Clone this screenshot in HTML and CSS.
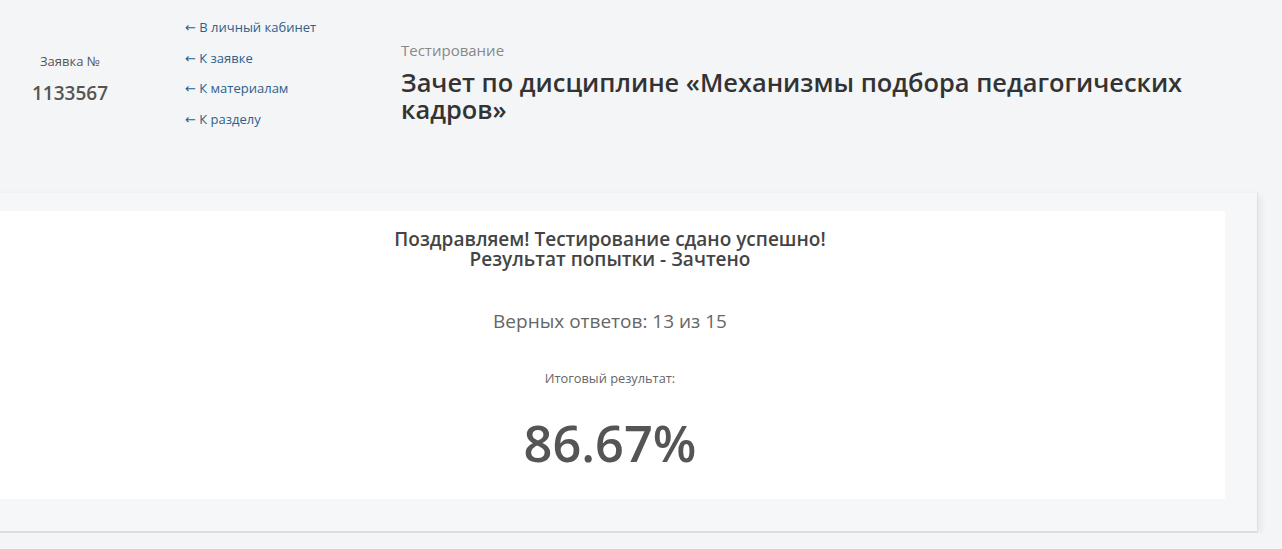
FILE: index.html
```html
<!DOCTYPE html>
<html lang="ru">
<head>
    <meta charset="UTF-8">
    <meta name="viewport" content="width=device-width, initial-scale=1.0">
    <title>Тестирование</title>
    <link rel="stylesheet" href="styles.css">
</head>
<body>
    <div class="page-head">
        <div class="order">
            <div class="order-label">Заявка №</div>
            <div class="order-number">1133567</div>
        </div>

        <ul class="back-links">
            <li><a href="#"><span class="arrow">&larr;</span> В личный кабинет</a></li>
            <li><a href="#"><span class="arrow">&larr;</span> К заявке</a></li>
            <li><a href="#"><span class="arrow">&larr;</span> К материалам</a></li>
            <li><a href="#"><span class="arrow">&larr;</span> К разделу</a></li>
        </ul>

        <div class="page-title">
            <div class="page-type">Тестирование</div>
            <h1>Зачет по дисциплине «Механизмы подбора педагогических кадров»</h1>
        </div>
    </div>

    <div class="card">
        <div class="result">
            <p class="result-status">Поздравляем! Тестирование сдано успешно!<br>Результат попытки - Зачтено</p>
            <p class="result-answers">Верных ответов: 13 из 15</p>
            <p class="result-label">Итоговый результат:</p>
            <p class="result-score">86.67%</p>
        </div>
    </div>
</body>
</html>
```

FILE: styles.css
```css
body {
    margin: 0;
    font-family: "Open Sans", Arial, sans-serif;
    background-color: #f4f5f7;
    color: #333;
    overflow: hidden;
}

.page-head {
    display: flex;
    align-items: flex-start;
    height: 193px;
}

.order {
    width: 140px;
    padding-top: 51px;
    text-align: center;
    color: #555;
}

.order-label {
    font-size: 13px;
    line-height: 20px;
}

.order-number {
    margin-top: 10px;
    font-size: 19px;
    font-weight: 600;
    line-height: 24px;
}

.back-links {
    list-style: none;
    margin: 0 0 0 45px;
    padding: 12px 0 0;
    width: 216px;
}

.back-links li {
    height: 30.7px;
    font-size: 13px;
    line-height: 30.7px;
}

.back-links a {
    color: #2d5f8b;
    text-decoration: none;
}

.back-links .arrow {
    font-family: "DejaVu Sans", sans-serif;
    line-height: 13px;
}

.page-title {
    flex: 1;
    padding-top: 40px;
    padding-right: 80px;
}

.page-type {
    font-size: 15px;
    line-height: 20px;
    color: #888;
}

.page-title h1 {
    margin: 9px 0 0;
    font-size: 25.4px;
    font-weight: 600;
    line-height: 27px;
    color: #333;
}

.card {
    margin-left: -37px;
    width: 1230px;
    padding: 18px 32px 32px;
    background: #f6f7f9;
    border-right: 1px solid #dedfe1;
    border-bottom: 2px solid #dcdde0;
    box-shadow: 2px 3px 8px rgba(0, 0, 0, 0.07);
}

.result {
    background: #fff;
    text-align: center;
    padding: 19px 0 10px;
    height: 259px;
}

.result p {
    margin: 0;
}

.result-status {
    font-size: 19px;
    font-weight: 600;
    line-height: 19.5px;
    color: #444;
}

.result-answers {
    padding-top: 40px;
    font-size: 19px;
    line-height: 24px;
    color: #666;
}

.result-label {
    padding-top: 36px;
    font-size: 12.8px;
    line-height: 18px;
    color: #666;
}

.result-score {
    padding-top: 24px;
    font-size: 50.5px;
    font-weight: 600;
    line-height: 64px;
    color: #555;
}
```
